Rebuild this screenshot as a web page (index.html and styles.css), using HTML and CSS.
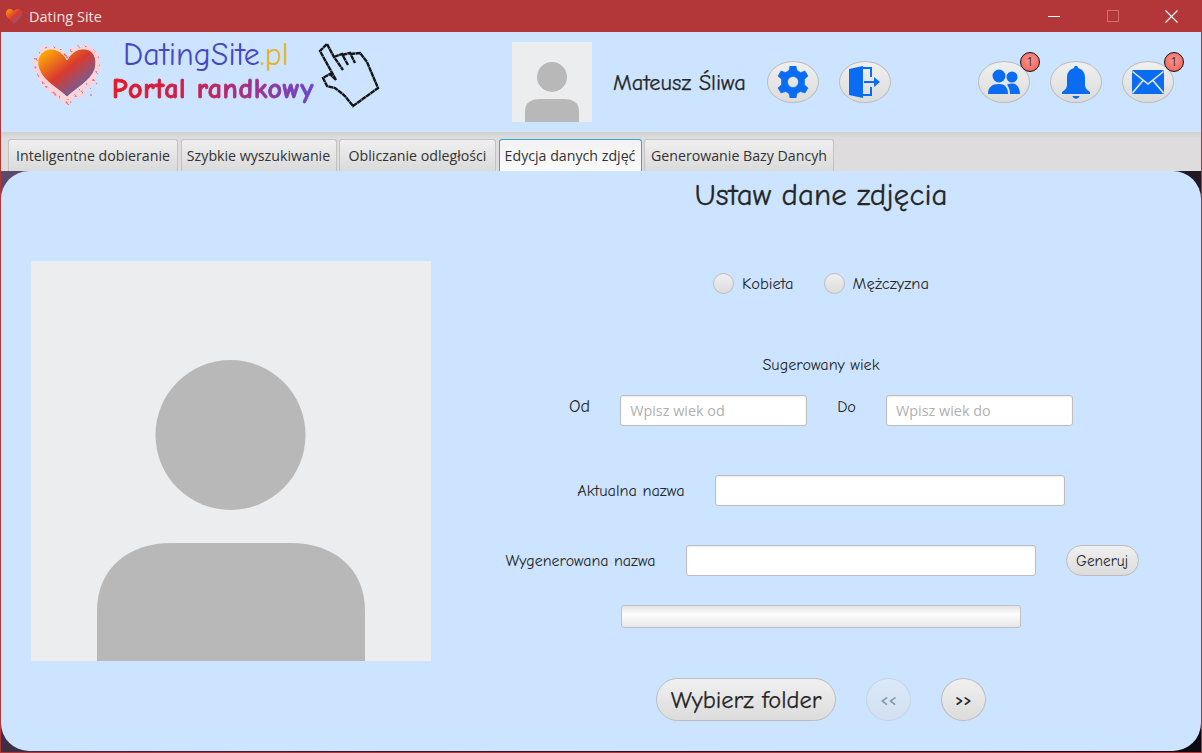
FILE: index.html
```html
<!DOCTYPE html>
<html>
<head>
<meta charset="utf-8">
<title>Dating Site</title>
<link rel="stylesheet" href="styles.css">
</head>
<body>
<div class="window">

  <div class="titlebar">
    <svg class="app-icon" width="18" height="16" viewBox="0 0 18 16"><defs><linearGradient id="tg" x1="0" y1="0" x2="1" y2="1"><stop offset="0" stop-color="#ffa60a"/><stop offset=".5" stop-color="#d83a30"/><stop offset="1" stop-color="#5f67a8"/></linearGradient></defs><path d="M9 15.5C4 11.5 1 9 1 5.2 1 2.6 3 1 5 1c1.800 0 3.200 1 4 2.600C9.800 2 11.200 1 13 1c2 0 4 1.600 4 4.200C17 9 14 11.500 9 15.500Z" fill="url(#tg)"/></svg>
    <span class="title-text">Dating Site</span>
    <div class="win-controls">
      <span class="win-btn"><svg width="12" height="12" viewBox="0 0 12 12"><path d="M0 6.500H12" stroke="#fff" stroke-width="1"/></svg></span>
      <span class="win-btn"><svg width="12" height="12" viewBox="0 0 12 12"><rect x=".5" y=".5" width="11" height="11" fill="none" stroke="#cf7272"/></svg></span>
      <span class="win-btn"><svg width="13" height="13" viewBox="0 0 13 13"><path d="M.5 .5L12.500 12.500M12.500 .5L.5 12.500" stroke="#fff" stroke-width="1.100"/></svg></span>
    </div>
  </div>

  <div class="header">
    <div class="logo">
      <svg class="logo-heart" width="72" height="68" viewBox="0 0 72 68">
        <defs>
          <linearGradient id="hg" x1="0.1" y1="0.05" x2="0.85" y2="0.85"><stop offset="0" stop-color="#ffab08"/><stop offset=".5" stop-color="#d93a2e"/><stop offset="1" stop-color="#5d66ae"/></linearGradient>
          <filter id="rough" x="-15%" y="-15%" width="130%" height="130%"><feTurbulence type="fractalNoise" baseFrequency=".22" numOctaves="2" seed="4"/><feDisplacementMap in="SourceGraphic" scale="9"/></filter>
        </defs>
        <g filter="url(#rough)">
          <path d="M36 60C26 52 7 42 4 25 1 11 9 1 20 1 27 1 33 5 36 11 39 5 46 0 53 1 65 1 71 11 68 25 64 42 46 52 36 60Z" fill="#fbd3da"/>
          <path d="M36 58C27 50 8 41 5 25 2 12 10 2 20 2 27 2 33 6 36 12 39 6 46 1 53 2 64 2 70 12 67 25 63 41 45 50 36 58Z" fill="none" stroke="#ea5563" stroke-width="1.800" stroke-dasharray="2 6" stroke-opacity=".8"/>
        </g>
        <circle cx="60" cy="50" r="1" fill="#f0808a"/>
        <path d="M36 52C28 44 12 36 8 24 4 13 11 4 20 4 27 4 33 9 36 15 39 9 46 3 53 4 62 4 67 13 64 24 60 36 44 44 36 52Z" fill="url(#hg)" stroke="#fde7e2" stroke-width=".8"/>
      </svg>
      <div class="logo-words">
        <div class="logo-site">DatingSite<span class="logo-pl">.pl</span></div>
        <div class="logo-portal">Portal randkowy</div>
      </div>
      <svg class="logo-hand" width="75" height="72" viewBox="0 0 75 72"><path d="M21 42L5 13 12 6 19 19 28 32M19 19L27 16 33 27M27 17L35 15 40 25M35 16L45 15 52 24 63 50 38 68 30 58 20 50 12 48 8 40 15 36 21 42" fill="none" stroke="#161616" stroke-width="2.400" stroke-dasharray="5 .4"/></svg>
    </div>

    <svg class="avatar-small" width="80" height="80" viewBox="0 0 80 80"><rect width="80" height="80" fill="#ecedef"/><circle cx="40" cy="35" r="15" fill="#b8b8b8"/><path d="M13 80V69C13 60 20 57 28 57H52C60 57 67 60 67 69V80Z" fill="#b8b8b8"/></svg>
    <div class="user-name">Mateusz Śliwa</div>

    <div class="icon-group">
      <button class="round-btn"><svg width="32" height="32" viewBox="0 0 32 32"><path fill="#0a6cf0" fill-rule="evenodd" d="M13 0H19L20 4.500 23.500 6.500 28 5 31 10 27.500 13.200V18.800L31 22 28 27 23.500 25.500 20 27.500 19 32H13L12 27.500 8.500 25.500 4 27 1 22 4.500 18.800V13.200L1 10 4 5 8.500 6.500 12 4.500ZM16 10.500A5.500 5.500 0 1 0 16 21.500 5.500 5.500 0 1 0 16 10.500Z" stroke="#0a6cf0" stroke-width=".6" stroke-linejoin="round"/></svg></button>
      <button class="round-btn"><svg width="32" height="32" viewBox="0 0 32 32"><path fill="#0a6cf0" d="M0 3L14 0V32L0 29Z"/><path fill="none" stroke="#0a6cf0" stroke-width="2" d="M14 2H22V11M22 21V29H14"/><path fill="#0a6cf0" d="M15 15H25V11L31 16 25 21V17H15Z"/></svg></button>
    </div>

    <div class="icon-group icon-group-right">
      <button class="round-btn"><svg width="32" height="26" viewBox="0 0 32 26"><circle cx="11" cy="7" r="6.500" fill="#0a6cf0"/><circle cx="24" cy="8" r="5.500" fill="#0a6cf0"/><path fill="#0a6cf0" d="M0 25C0 18 4 15 11 15 18 15 20 20 20 25Z"/><path fill="#0a6cf0" d="M22 25C22 20 20 17 19 15.500 21 14.500 23 14.500 25 14.500 29 15 32 19 32 25Z"/></svg><span class="badge">1</span></button>
      <button class="round-btn"><svg width="28" height="34" viewBox="0 0 28 34"><path fill="#0a6cf0" d="M12 3C12 0 16 0 16 3 21 4.500 23 8 23 13V20C23 23 25 25 28 27V29H0V27C3 25 5 23 5 20V13C5 8 7 4.500 12 3Z"/><path fill="#0a6cf0" d="M10.500 31H17.500C16.500 34.500 11.500 34.500 10.500 31Z"/></svg></button>
      <button class="round-btn"><svg width="32" height="24" viewBox="0 0 32 24"><rect width="32" height="24" rx="1.500" fill="#0a6cf0"/><path d="M.5 1.500L16 14 31.500 1.500M.5 23L11 10.500M31.500 23L21 10.500" fill="none" stroke="#e4e6e9" stroke-width="1.600"/></svg><span class="badge">1</span></button>
    </div>
  </div>

  <div class="tabbar">
    <div class="tab tab-1">Inteligentne dobieranie</div>
    <div class="tab tab-2">Szybkie wyszukiwanie</div>
    <div class="tab tab-3">Obliczanie odległości</div>
    <div class="tab tab-4 tab-active">Edycja danych zdjęć</div>
    <div class="tab tab-5">Generowanie Bazy Dancyh</div>
  </div>

  <div class="content-back">
    <div class="content">
      <div class="photo-col">
        <svg class="photo" width="400" height="400" viewBox="0 0 400 400"><rect width="400" height="400" fill="#ecedef"/><circle cx="199.500" cy="174" r="75" fill="#b8b8b8"/><path d="M66 400V350C66 305 100 282 140 282H260C300 282 334 305 334 350V400Z" fill="#b8b8b8"/></svg>
      </div>
      <div class="form-col">
        <h1 class="form-title">Ustaw dane zdjęcia</h1>

        <div class="radios">
          <label class="radio"><span class="radio-dot"></span>Kobieta</label>
          <label class="radio"><span class="radio-dot"></span>Mężczyzna</label>
        </div>

        <div class="age-title">Sugerowany wiek</div>
        <div class="row row-age">
          <span class="label label-od">Od</span>
          <input class="field field-age" type="text" placeholder="Wpisz wiek od">
          <span class="label label-do">Do</span>
          <input class="field field-age" type="text" placeholder="Wpisz wiek do">
        </div>

        <div class="row row-current">
          <span class="label">Aktualna nazwa</span>
          <input class="field field-name" type="text">
        </div>

        <div class="row row-generated">
          <span class="label">Wygenerowana nazwa</span>
          <input class="field field-name" type="text">
          <button class="pill pill-small">Generuj</button>
        </div>

        <div class="progress"></div>

        <div class="row row-buttons">
          <button class="pill pill-big">Wybierz folder</button>
          <button class="pill pill-arrow pill-disabled">&lt;&lt;</button>
          <button class="pill pill-arrow">&gt;&gt;</button>
        </div>
      </div>
    </div>
  </div>

</div>
</body>
</html>
```

FILE: styles.css
```css
html, body {
  margin: 0;
  height: 100%;
  overflow: hidden;
}
body {
  background-color: #b33638;
  font-family: "Comic Sans MS", "Comic Neue", cursive, sans-serif;
  color: #262626;
}
.window {
  display: flex;
  flex-direction: column;
  height: 753px;
  box-sizing: border-box;
  padding: 0 1px 1px;
}

/* title bar */
.titlebar {
  display: flex;
  align-items: center;
  height: 32px;
  flex: none;
  font-family: "Open Sans", "Noto Sans", sans-serif;
  font-size: 14.500px;
  color: #f6e3e3;
}
.app-icon {
  margin-left: 4px;
  margin-right: 6px;
}
.win-controls {
  display: flex;
  margin-left: auto;
}
.win-btn {
  display: flex;
  align-items: center;
  justify-content: center;
  width: 59px;
  height: 32px;
}

/* header */
.header {
  display: flex;
  height: 100px;
  flex: none;
  background: #cce4ff;
  align-items: flex-start;
}
.logo {
  display: flex;
  width: 511px;
  flex: none;
  height: 100px;
}
.logo-heart {
  margin: 13px 0 0 30px;
}
.logo-words {
  margin: 4px 0 0 9px;
}
.logo-site {
  font-size: 32px;
  line-height: 37px;
  margin-left: 11px;
  color: #4747c4;
}
.logo-pl {
  color: #e6b32a;
}
.logo-portal {
  font-size: 28px;
  line-height: 32px;
  font-weight: bold;
  letter-spacing: .6px;
  white-space: nowrap;
  background: linear-gradient(90deg, #e8141f 0%, #c0245f 50%, #6a46cc 100%);
  -webkit-background-clip: text;
  background-clip: text;
  color: transparent;
  -webkit-text-stroke: .8px transparent;
}
.logo-hand {
  margin: 6px 0 0 1px;
}
.avatar-small {
  margin-top: 10px;
  flex: none;
}
.user-name {
  margin: 37px 0 0 21px;
  width: 134px;
  font-size: 22.500px;
  line-height: 28px;
  white-space: nowrap;
  -webkit-text-stroke: .25px #262626;
}
.icon-group {
  display: flex;
  gap: 20px;
  margin: 29px 0 0 20px;
}
.icon-group-right {
  margin-left: auto;
  margin-right: 27px;
}
.round-btn {
  position: relative;
  display: flex;
  align-items: center;
  justify-content: center;
  width: 52px;
  height: 42px;
  padding: 0;
  border: 1px solid #bcbcbc;
  border-radius: 50%;
  background: linear-gradient(#f0f0f0, #dcdcdc);
}
.round-btn svg {
  display: block;
}
.badge {
  position: absolute;
  top: -10px;
  right: -11px;
  width: 18px;
  height: 18px;
  border: 1px solid #111;
  border-radius: 50%;
  background: radial-gradient(circle at 50% 40%, #ff9488, #ee5a55);
  font-family: "Open Sans", sans-serif;
  font-size: 12px;
  line-height: 18px;
  text-align: center;
  color: #333;
}

/* tabs */
.tabbar {
  display: flex;
  gap: 2.500px;
  height: 39px;
  flex: none;
  box-sizing: border-box;
  padding: 7px 0 0 7px;
  background: linear-gradient(#d0d0d0, #dedcdc 6px);
  font-family: "Open Sans", "Noto Sans", sans-serif;
  font-size: 14.200px;
}
.tab {
  display: flex;
  align-items: center;
  justify-content: center;
  box-sizing: border-box;
  height: 32px;
  border: 1px solid #c2c2c2;
  border-bottom: none;
  border-radius: 3px 3px 0 0;
  background: linear-gradient(#efefef, #dadada);
  color: #333;
  white-space: nowrap;
}
.tab-1 { width: 170px; }
.tab-2 { width: 156px; }
.tab-3 { width: 157px; }
.tab-4 { width: 143px; }
.tab-5 { width: 190px; }
.tab-active {
  background: linear-gradient(#f2f2f2, #fafafa);
  border-color: #2fa8d8;
}

/* main panel */
.content-back {
  flex: 1;
  display: flex;
  min-height: 0;
  box-sizing: border-box;
  padding-bottom: 1px;
  background: linear-gradient(135deg, #5d4a6a 0%, #2c2030 50%, #0c0a12 100%);
}
.content {
  flex: 1;
  display: flex;
  min-width: 0;
  background: #cce4ff;
  border-radius: 28px;
}
.photo-col {
  width: 439px;
  flex: none;
  padding: 90px 0 0 30px;
  box-sizing: border-box;
}
.photo {
  display: block;
}
.form-col {
  flex: 1;
  display: flex;
  flex-direction: column;
  align-items: center;
  min-width: 0;
  padding-left: 1px;
}
.form-title {
  margin: 7px 0 0;
  font-size: 31px;
  font-weight: normal;
  line-height: 35px;
  -webkit-text-stroke: .3px #262626;
}
.radios {
  display: flex;
  gap: 30px;
  margin-top: 58px;
  height: 24px;
  align-items: center;
}
.radio {
  display: flex;
  align-items: center;
  gap: 8px;
  font-size: 16.500px;
}
.radio-dot {
  width: 19px;
  height: 19px;
  border: 1px solid #bdbdbd;
  border-radius: 50%;
  background: linear-gradient(#f0f0f0, #dcdcdc);
}
.age-title {
  margin-top: 60px;
  font-size: 16.200px;
  line-height: 20px;
}
.row {
  display: flex;
  align-items: center;
}
.row-age {
  margin-top: 20px;
}
.label {
  font-size: 16.300px;
  line-height: 20px;
  white-space: nowrap;
}
.label-od {
  margin-right: 30px;
  font-size: 18px;
  position: relative;
  top: -4px;
}
.label-do {
  margin: 0 30px;
  position: relative;
  top: -4px;
}
.field {
  box-sizing: border-box;
  height: 31px;
  padding: 0 9px;
  border: 1px solid #bdbdbd;
  border-radius: 3px;
  background: #fff;
  box-shadow: inset 0 1px 2px rgba(0, 0, 0, .08);
  font-family: "Open Sans", "Noto Sans", sans-serif;
  font-size: 14.400px;
  outline: none;
}
.field::placeholder {
  color: #b0b0b0;
}
.field-age {
  width: 187px;
}
.field-name {
  width: 350px;
}
.row-current {
  gap: 30px;
  margin-top: 49px;
}
.row-generated {
  gap: 30px;
  margin-top: 39px;
  margin-left: 2px;
}
.row-generated .label {
  font-size: 16px;
}
.progress {
  box-sizing: border-box;
  width: 400px;
  height: 23px;
  margin-top: 29px;
  border: 1px solid #c0c0c8;
  border-radius: 3px;
  background: linear-gradient(#e4e4e4, #fdfdfd 40%, #e6e6e6);
}
.row-buttons {
  gap: 30px;
  margin-top: 50px;
}
.pill {
  box-sizing: border-box;
  padding: 0;
  border: 1px solid #bcbcbc;
  background: linear-gradient(#f0f0f0, #dcdcdc);
  font-family: inherit;
  color: #262626;
}
.pill-small {
  width: 73px;
  height: 31px;
  border-radius: 16px;
  font-size: 15.300px;
}
.pill-big {
  width: 180px;
  height: 43px;
  border-radius: 22px;
  font-size: 24.400px;
  -webkit-text-stroke: .25px #262626;
}
.pill-arrow {
  width: 45px;
  height: 43px;
  border-radius: 50%;
  font-size: 15px;
  font-weight: bold;
}
.pill-disabled {
  opacity: .4;
}
```
